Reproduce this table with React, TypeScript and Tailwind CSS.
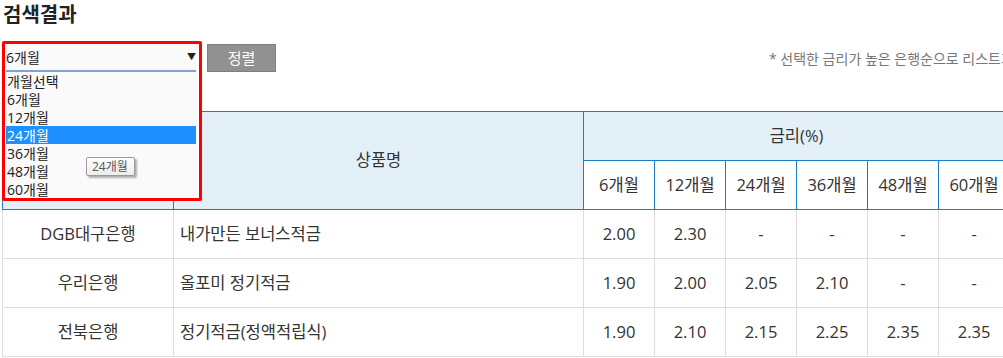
import React from "react";

const months = ["6개월", "12개월", "24개월", "36개월", "48개월", "60개월"];
const options = ["개월선택", "6개월", "12개월", "24개월", "36개월", "48개월", "60개월"];

const rows = [
  { bank: "DGB대구은행", product: "내가만든 보너스적금", rates: ["2.00", "2.30", "-", "-", "-", "-"] },
  { bank: "우리은행", product: "올포미 정기적금", rates: ["1.90", "2.00", "2.05", "2.10", "-", "-"] },
  { bank: "전북은행", product: "정기적금(정액적립식)", rates: ["1.90", "2.10", "2.15", "2.25", "2.35", "2.35"] },
];

export default function App() {
  return (
    <div className="relative h-[358px] w-[1003px] overflow-hidden bg-white font-['Open_Sans','Noto_Sans_CJK_KR',sans-serif] text-[#333]">
      <h2 className="h-[33px] pl-[3px] pt-[1px] text-[20px] font-bold leading-[28px] text-[#222]">검색결과</h2>

      <div className="mt-[11px] flex h-[28px] items-center">
        <div className="relative ml-[2px] h-[28px] w-[200px] shrink-0">
          <div className="absolute left-0 top-[-3px] z-10 flex h-[160px] w-[200px] flex-col rounded-[2px] border-[3px] border-[#ff0000] bg-[#fafafa]">
            <div className="flex h-[26px] items-center justify-between pl-[1px] pr-[3px] text-[14px] text-[#222]">
              <span>6개월</span>
              <span className="text-[9px] text-[#222]">▼</span>
            </div>
            <div className="ml-[1px] mr-[3px] h-[2px] bg-[#7ea3d9]" />
            <ul className="flex flex-col">
              {options.map((o) => (
                <li
                  key={o}
                  className={
                    o === "24개월"
                      ? "ml-[1px] mr-[3px] flex h-[18px] items-center bg-[#1e90ff] pl-[1px] text-[14px] text-white"
                      : "ml-[1px] mr-[3px] flex h-[18px] items-center pl-[1px] text-[14px] text-[#222]"
                  }
                >
                  {o}
                </li>
              ))}
            </ul>
          </div>
        </div>
        <button className="ml-[5px] h-[28px] w-[69px] shrink-0 border border-[#7f7f7f] bg-[#919191] text-[15px] text-white">정렬</button>
        <p className="ml-[493px] shrink-0 whitespace-nowrap text-[14px] text-[#777]">* 선택한 금리가 높은 은행순으로 리스트가 정렬됩니다.</p>
      </div>

      <table className="ml-[2px] mt-[39px] w-[1007px] table-fixed border-collapse text-[16.5px]">
        <colgroup>
          <col className="w-[171px]" />
          <col className="w-[410px]" />
          {months.map((m) => (
            <col key={m} className="w-[71px]" />
          ))}
        </colgroup>
        <thead>
          <tr className="h-[49px]">
            <th rowSpan={2} className="border border-[#1a7fc7] bg-[#e4f0f7] font-normal">금융회사</th>
            <th rowSpan={2} className="border border-[#1a7fc7] bg-[#e4f0f7] font-normal">상품명</th>
            <th colSpan={6} className="border border-[#1a7fc7] bg-[#e4f0f7] font-normal">금리(%)</th>
          </tr>
          <tr className="h-[49px]">
            {months.map((m) => (
              <th key={m} className="border border-[#1a7fc7] bg-white font-normal">{m}</th>
            ))}
          </tr>
        </thead>
        <tbody>
          {rows.map((r) => (
            <tr key={r.bank} className="h-[49px]">
              <td className="border border-[#dddddd] text-center">{r.bank}</td>
              <td className="border border-[#dddddd] pl-[6px] text-left">{r.product}</td>
              {r.rates.map((v, i) => (
                <td key={i} className="border border-[#dddddd] text-center">{v}</td>
              ))}
            </tr>
          ))}
        </tbody>
      </table>

      <div className="absolute left-[86px] top-[157px] z-20 flex h-[19px] w-[49px] items-center rounded-[2px] border border-[#9a9a9a] bg-gradient-to-b from-white to-[#ececec] pl-[5px] text-[12px] text-[#555] shadow-[2px_2px_2px_rgba(0,0,0,0.3)]">
        24개월
      </div>
    </div>
  );
}
